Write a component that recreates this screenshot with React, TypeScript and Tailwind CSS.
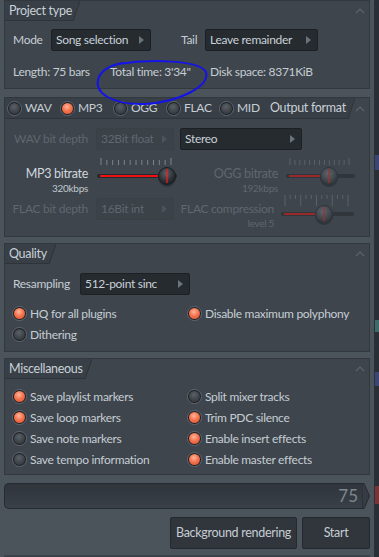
import React from "react";

function Radio({ on }: { on: boolean }) {
  return (
    <span className="inline-flex w-[15px] h-[15px] shrink-0 items-center justify-center rounded-full border border-[#626a72] bg-[#1c2024]">
      <span
        className={
          on
            ? "w-[11px] h-[11px] rounded-full bg-[radial-gradient(circle_at_45%_35%,#ffb59d_0%,#f4744f_45%,#d34a2b_100%)]"
            : "w-[11px] h-[11px] rounded-full bg-[radial-gradient(circle_at_45%_35%,#5a6167_0%,#3b4146_60%,#2c3135_100%)]"
        }
      />
    </span>
  );
}

function Chevron() {
  return (
    <svg width="10" height="6" viewBox="0 0 10 6" className="shrink-0">
      <polyline points="1,5 5,1 9,5" fill="none" stroke="#5c656d" strokeWidth="1.2" />
    </svg>
  );
}

function Tab({ children, tabClass }: { children: React.ReactNode; tabClass: string }) {
  return (
    <div className="flex h-[20px] items-stretch">
      <div className={"flex items-center bg-[#383f46] border-b border-[#2e3439] " + tabClass}>{children}</div>
      <svg width="7" height="20" viewBox="0 0 7 20" className="shrink-0">
        <polygon points="0,0 7,0 0,20" fill="#383f46" />
        <line x1="7" y1="0" x2="0" y2="20" stroke="#2e3439" strokeWidth="1" />
      </svg>
      <div className="flex-1" />
      <div className="flex items-center pr-[4px]">
        <Chevron />
      </div>
    </div>
  );
}

function Arrow({ dim }: { dim?: boolean }) {
  return (
    <svg width="5" height="8" viewBox="0 0 5 8" className="shrink-0">
      <polygon points="0,0 5,4 0,8" fill={dim ? "#4c545b" : "#6b737b"} />
    </svg>
  );
}

function Dropdown({ label, cls, disabled }: { label: string; cls: string; disabled?: boolean }) {
  return (
    <div
      className={
        "flex h-[22px] shrink-0 items-center justify-between rounded-[2px] border pl-[4px] pr-[6px] " +
        (disabled
          ? "border-[#394046] bg-[#3b4248] text-[#5f676f] "
          : "border-[#1c2024] bg-[#262b30] text-[#c9d1d8] ") +
        cls
      }
    >
      <span>{label}</span>
      <Arrow dim={disabled} />
    </div>
  );
}

function Slider({
  w,
  fillEnd,
  knobX,
  disabled,
  tall,
}: {
  w: number;
  fillEnd: number;
  knobX: number;
  disabled?: boolean;
  tall?: boolean;
}) {
  const ticks = [];
  const n = 13;
  for (let i = 0; i < n; i++) {
    const x = 4 + (i * (w - 10)) / (n - 1);
    ticks.push(x);
  }
  const tickCol = disabled ? "#5a6269" : "#7b838b";
  const trackY = 20;
  return (
    <svg width={w} height="32" viewBox={`0 0 ${w} 32`} className="shrink-0">
      <defs>
        <radialGradient id={"k" + knobX + w} cx="45%" cy="35%" r="65%">
          <stop offset="0%" stopColor={disabled ? "#5d646b" : "#5a6167"} />
          <stop offset="70%" stopColor={disabled ? "#3d444a" : "#2b3035"} />
          <stop offset="100%" stopColor={disabled ? "#31373c" : "#1f2327"} />
        </radialGradient>
      </defs>
      {ticks.map((x, i) =>
        tall ? (
          <g key={i}>
            <line x1={x} y1={1} x2={x} y2={i % 3 === 0 ? 12 : 5} stroke={tickCol} strokeWidth="1" />
          </g>
        ) : (
          <line key={i} x1={x} y1={i === 0 || i === n - 1 ? 2 : 4} x2={x} y2={9} stroke={tickCol} strokeWidth="1" />
        )
      )}
      <rect x="0" y={trackY - 2} width={w} height="4" rx="2" fill={disabled ? "#30363c" : "#24292d"} />
      <rect x="3" y={trackY - 1} width={fillEnd - 3} height="2" fill={disabled ? "#9a2a2a" : "#ee1111"} />
      <circle cx={knobX} cy={trackY + 2} r="9" fill="#262b30" opacity="0.6" />
      <circle cx={knobX} cy={trackY} r="8.5" fill={`url(#k${knobX}${w})`} stroke={disabled ? "#2f353a" : "#1a1e21"} strokeWidth="1" />
      <line x1={knobX} y1={trackY - 7} x2={knobX} y2={trackY + 7} stroke={disabled ? "#a33030" : "#ff1a1a"} strokeWidth="1.2" />
    </svg>
  );
}

function Panel({ children, cls }: { children: React.ReactNode; cls: string }) {
  return <div className={"flex flex-col border border-[#32383e] bg-[#3e454c] " + cls}>{children}</div>;
}

function RadioRow({ on, label }: { on: boolean; label: string }) {
  return (
    <div className="flex h-[21px] items-center gap-[3px]">
      <Radio on={on} />
      <span>{label}</span>
    </div>
  );
}

export default function App() {
  return (
    <div className="relative flex h-[557px] w-[379px] overflow-hidden whitespace-nowrap bg-[#262b31] font-['Lato',sans-serif] text-[12px] leading-[16px] tracking-[-0.3px] text-[#c5cdd4]">
      <div className="flex h-[557px] w-[375px] shrink-0 flex-col border-r border-[#2b3035] bg-[#4b535b] px-[4px]">
        {/* Project type */}
        <Panel cls="h-[89px]">
          <Tab tabClass="pl-[4px] pr-[1px] text-[12.5px] text-[#c9d1d8]">Project type</Tab>
          <div className="mt-[8px] flex items-center">
            <span className="ml-[8px] w-[38px]">Mode</span>
            <Dropdown label="Song selection" cls="w-[100px]" />
            <span className="ml-[30px] w-[24px]">Tail</span>
            <Dropdown label="Leave remainder" cls="w-[113px]" />
          </div>
          <div className="mt-[13px] flex items-center">
            <span className="ml-[8px] w-[97px]">Length: 75 bars</span>
            <span className="w-[100px]">Total time: 3'34"</span>
            <span>Disk space: 8371KiB</span>
          </div>
        </Panel>

        {/* Output format */}
        <Panel cls="mt-[8px] h-[140px]">
          <div className="flex h-[21px] items-stretch">
            <div className="flex items-center bg-[#383f46] border-b border-[#2e3439] pl-[2px]">
              <div className="flex w-[53px] items-center gap-[3px]"><Radio on={false} /><span>WAV</span></div>
              <div className="flex w-[53px] items-center gap-[3px]"><Radio on={true} /><span>MP3</span></div>
              <div className="flex w-[53px] items-center gap-[3px]"><Radio on={false} /><span>OGG</span></div>
              <div className="flex w-[53px] items-center gap-[3px]"><Radio on={false} /><span>FLAC</span></div>
              <div className="flex w-[51px] items-center gap-[3px]"><Radio on={false} /><span>MID</span></div>
              <span className="w-[78px] pr-[1px] text-[12.5px] text-[#c9d1d8]">Output format</span>
            </div>
            <svg width="7" height="21" viewBox="0 0 7 21" className="shrink-0">
              <polygon points="0,0 7,0 0,21" fill="#383f46" />
              <line x1="7" y1="0" x2="0" y2="21" stroke="#2e3439" strokeWidth="1" />
            </svg>
            <div className="flex-1" />
            <div className="flex items-center pr-[4px]"><Chevron /></div>
          </div>
          <div className="mt-[9px] flex items-center">
            <span className="w-[83px] text-right text-[#5f676f]">WAV bit depth</span>
            <Dropdown label="32Bit float" cls="ml-[8px] w-[78px]" disabled />
            <Dropdown label="Stereo" cls="ml-[6px] w-[122px]" />
          </div>
          <div className="mt-[6px] flex h-[38px] items-start">
            <div className="flex w-[83px] shrink-0 flex-col items-end pt-[10px]">
              <span className="text-[12.5px] text-[#d0d8df]">MP3 bitrate</span>
              <span className="text-[10px] leading-[13px] text-[#c0c8cf]">320kbps</span>
            </div>
            <div className="ml-[9px]">
              <Slider w={80} fillEnd={64} knobX={70} />
            </div>
            <div className="ml-[10px] flex w-[91px] shrink-0 flex-col items-end pt-[10px]">
              <span className="text-[12.5px] text-[#5f676f]">OGG bitrate</span>
              <span className="text-[10px] leading-[13px] text-[#5f676f]">192kbps</span>
            </div>
            <div className="ml-[8px]">
              <Slider w={69} fillEnd={37} knobX={43} disabled />
            </div>
          </div>
          <div className="mt-[4px] flex h-[34px] items-start">
            <span className="mt-[3px] w-[83px] shrink-0 text-right text-[#5f676f]">FLAC bit depth</span>
            <Dropdown label="16Bit int" cls="ml-[8px] w-[78px]" disabled />
            <div className="ml-[4px] flex w-[96px] shrink-0 flex-col items-end pt-[3px]">
              <span className="text-[#5f676f]">FLAC compression</span>
              <span className="text-[10px] leading-[13px] text-[#5f676f]">level 5</span>
            </div>
            <div className="ml-[7px] -mt-[4px]">
              <Slider w={73} fillEnd={35} knobX={43} disabled tall />
            </div>
          </div>
        </Panel>

        {/* Quality */}
        <Panel cls="mt-[6px] h-[109px]">
          <Tab tabClass="pl-[4px] pr-[2px] text-[12.5px] text-[#c9d1d8]">Quality</Tab>
          <div className="mt-[9px] flex items-center">
            <span className="ml-[8px] w-[67px]">Resampling</span>
            <Dropdown label="512-point sinc" cls="w-[110px]" />
          </div>
          <div className="mt-[8px] flex">
            <div className="ml-[7px] w-[175px]">
              <RadioRow on={true} label="HQ for all plugins" />
              <RadioRow on={false} label="Dithering" />
            </div>
            <div>
              <RadioRow on={true} label="Disable maximum polyphony" />
            </div>
          </div>
        </Panel>

        {/* Miscellaneous */}
        <Panel cls="mt-[6px] h-[117px]">
          <Tab tabClass="pl-[4px] pr-[2px] text-[12.5px] text-[#c9d1d8]">Miscellaneous</Tab>
          <div className="mt-[7px] flex">
            <div className="ml-[7px] w-[175px]">
              <RadioRow on={true} label="Save playlist markers" />
              <RadioRow on={true} label="Save loop markers" />
              <RadioRow on={false} label="Save note markers" />
              <RadioRow on={false} label="Save tempo information" />
            </div>
            <div>
              <RadioRow on={false} label="Split mixer tracks" />
              <RadioRow on={true} label="Trim PDC silence" />
              <RadioRow on={true} label="Enable insert effects" />
              <RadioRow on={true} label="Enable master effects" />
            </div>
          </div>
        </Panel>

        {/* Progress */}
        <div className="mt-[8px] flex h-[26px] items-stretch">
          <div className="flex flex-1 items-center justify-end rounded-l-[5px] border-y border-l border-[#262b30] bg-[linear-gradient(#2f353b,#3a4047)] pr-[4px] text-[17px] tracking-normal text-[#7f878f]">
            75
          </div>
          <svg width="8" height="26" viewBox="0 0 8 26" className="shrink-0">
            <polygon points="0,0.5 2,0.5 7.5,13 2,25.5 0,25.5" fill="#363c43" stroke="#262b30" strokeWidth="1" />
          </svg>
        </div>

        {/* Buttons */}
        <div className="mt-[8px] flex justify-end gap-[5px]">
          <div className="flex h-[32px] w-[127px] items-center justify-center rounded-[2px] border border-[#25292e] bg-[#30363c] text-[12.5px] text-[#c5cdd4]">
            Background rendering
          </div>
          <div className="flex h-[32px] w-[68px] items-center justify-center rounded-[2px] border border-[#25292e] bg-[#30363c] text-[12.5px] text-[#c5cdd4]">
            Start
          </div>
        </div>
        <div className="mt-auto h-[2px] bg-[#3b4249]" />
      </div>
      <div className="flex w-[4px] flex-col">
        <div className="h-[155px] bg-[#2a2f35]" />
        <div className="h-[15px] bg-[#3a4676]" />
        <div className="h-[150px] bg-[#2a2f35]" />
        <div className="h-[12px] bg-[#3d6a6a]" />
        <div className="h-[40px] bg-[#2a2f35]" />
        <div className="h-[14px] bg-[#3a4676]" />
        <div className="h-[100px] bg-[#2a2f35]" />
        <div className="h-[18px] bg-[#7a3434]" />
        <div className="flex-1 bg-[#2a2f35]" />
      </div>

      {/* blue hand-drawn annotation */}
      <svg className="pointer-events-none absolute left-0 top-0" width="379" height="557" viewBox="0 0 379 557">
        <path
          d="M 118 64 C 150 59, 200 60, 206 72 C 210 86, 180 102, 145 104 C 112 105, 95 93, 98 80 C 100 71, 108 66, 122 63"
          fill="none"
          stroke="#1414e6"
          strokeWidth="2"
          strokeLinecap="round"
        />
      </svg>
    </div>
  );
}
